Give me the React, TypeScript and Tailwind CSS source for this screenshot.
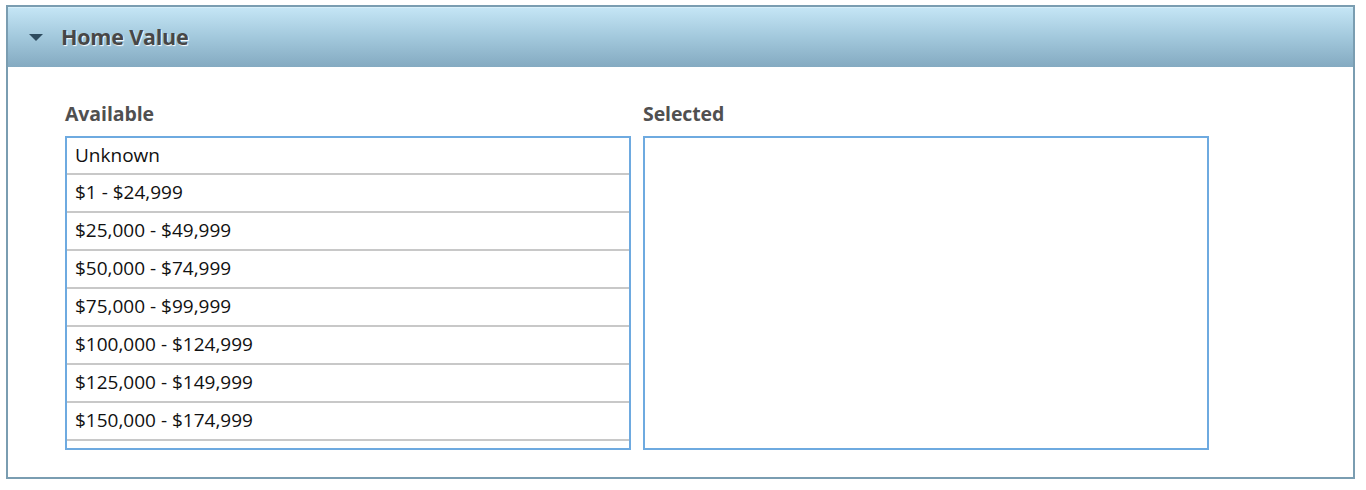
import React from 'react';

const ranges = [
	'Unknown',
	'$1 - $24,999',
	'$25,000 - $49,999',
	'$50,000 - $74,999',
	'$75,000 - $99,999',
	'$100,000 - $124,999',
	'$125,000 - $149,999',
	'$150,000 - $174,999',
	'$175,000 - $199,999',
];

const App: React.FC = () => {
	return (
		<div className="w-[1366px] h-[490px] bg-white pt-[5px] pl-[6px]" style={{fontFamily: '"Open Sans", "Noto Sans", sans-serif'}}>
			<div className="w-[1349px] h-[474px] border-2 border-[#7a9db1] flex flex-col">
				{/* panel header */}
				<div className="h-[60px] flex items-center bg-gradient-to-b from-[#c4e5f5] via-[#a2c8dc] to-[#84aac1] border-t border-[#d6eef9]">
					<svg width="14" height="8" viewBox="0 0 14 8" className="ml-[21px] mt-[1px]">
						<polygon points="0,0 14,0 7,7" fill="#2d4b5f" />
					</svg>
					<span className="ml-[18px] text-[21.5px] font-bold text-[#474747] tracking-[-0.2px] [text-shadow:1px_1px_1px_#ffffff]">
						Home Value
					</span>
				</div>

				<div className="flex gap-[12px] pl-[57px] pt-[34px]">
					<div className="flex flex-col">
						<div className="text-[19.5px] font-bold text-[#505050] leading-[26px] mb-[9px] tracking-[-0.1px]">Available</div>
						<div className="w-[566px] h-[314px] border-2 border-[#6eaae0] overflow-hidden">
							{ranges.map((r) => (
								<div key={r} className="h-[38px] first:h-[37px] border-b-2 border-[#c8c8c8] pl-[8px] pb-[1px] flex items-center text-[19px] text-[#111111]">
									{r}
								</div>
							))}
						</div>
					</div>
					<div className="flex flex-col">
						<div className="text-[19.5px] font-bold text-[#505050] leading-[26px] mb-[9px] tracking-[-0.1px]">Selected</div>
						<div className="w-[566px] h-[314px] border-2 border-[#6eaae0]" />
					</div>
				</div>
			</div>
		</div>
	);
};

export default App;
